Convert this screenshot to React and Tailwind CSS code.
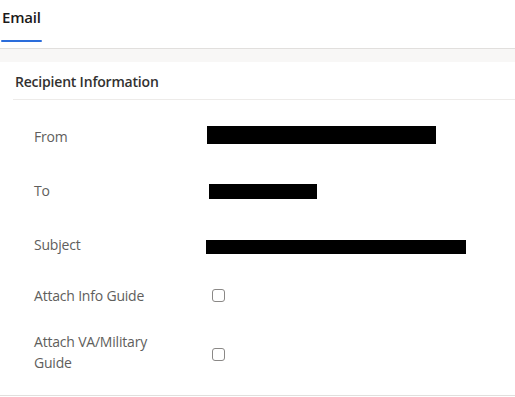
import React from 'react';

const fields = [
  { label: 'From', bar: 'ml-0 w-[229px] h-[18px] mt-[-2px]' },
  { label: 'To', bar: 'ml-[2px] w-[108px] h-[15px] mt-[2px]' },
  { label: 'Subject', bar: 'ml-[-1px] w-[260px] h-[14px] mt-[6px]' },
];

const Checkbox = ({ className = '' }) => (
  <span className={`ml-[5px] inline-block w-[13px] h-[13px] rounded-[3px] border border-[#8a8886] bg-white ${className}`} />
);

const App = () => {
  return (
    <div
      className="w-[515px] h-[397px] bg-white overflow-hidden"
      style={{ fontFamily: '"Segoe UI", "Open Sans", "Noto Sans", sans-serif' }}
    >
      {/* tab bar */}
      <div className="h-[48px] flex items-start">
        <div className="ml-[1px] w-[41px] h-[42px] flex flex-col justify-between">
          <span className="pt-[6px] pl-[1px] text-[15px] font-semibold text-[#1b1a19] tracking-[-0.2px]">Email</span>
          <span className="h-[2px] bg-[#2b6ddb] rounded-full" />
        </div>
      </div>
      <div className="h-[14px] border-t border-[#e1dfdd] bg-[#f8f7f6]" />

      {/* section */}
      <div className="pl-[13px]">
        <div className="h-[38px] border-b border-[#edebe9] flex items-center pl-[2px] pt-[2px]">
          <span className="text-[14px] font-semibold text-[#323130] tracking-[-0.2px]">Recipient Information</span>
        </div>
      </div>

      <div className="pt-[9px] pb-[10px] border-b border-[#e1dfdd]">
        {fields.map((f) => (
          <div key={f.label} className="flex items-center h-[54px]">
            <div className="w-[207px] pl-[34px] text-[14px] text-[#605e5c] tracking-[-0.2px]">{f.label}</div>
            <div className={`bg-black ${f.bar}`} />
          </div>
        ))}
        <div className="flex items-center h-[48px]">
          <div className="w-[207px] pl-[34px] text-[14px] text-[#605e5c] tracking-[-0.2px]">Attach Info Guide</div>
          <Checkbox className="mt-[1px]" />
        </div>
        <div className="flex items-center h-[66px]">
          <div className="w-[207px] pl-[34px] pr-[40px] text-[14px] leading-[21px] text-[#605e5c] tracking-[-0.2px]">
            Attach VA/Military Guide
          </div>
          <Checkbox className="mt-[4px]" />
        </div>
      </div>
    </div>
  );
};

export default App;
